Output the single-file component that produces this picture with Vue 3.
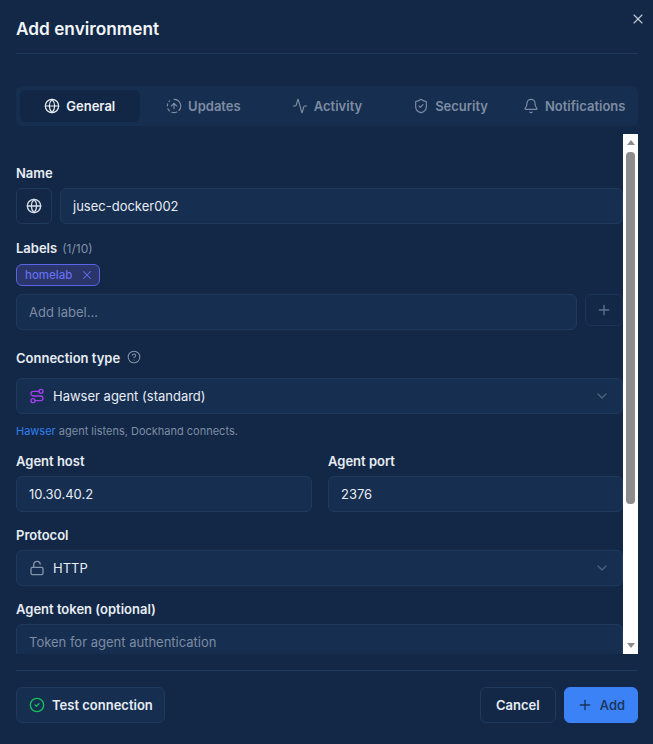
<script setup>
const tabs = [
  { label: 'General', active: true, paths: ['M12 2a14.5 14.5 0 0 0 0 20 14.5 14.5 0 0 0 0-20', 'M2 12h20', 'M22 12a10 10 0 1 1-20 0 10 10 0 0 1 20 0'] },
  { label: 'Updates', paths: ['M12 2a10 10 0 0 1 7.38 16.75', 'm16 12-4-4-4 4', 'M12 16V8', 'M2.5 8.875a10 10 0 0 0-.5 3', 'M2.83 16a10 10 0 0 0 2.43 3.4', 'M4.636 5.235a10 10 0 0 1 .891-.857', 'M8.644 21.42a10 10 0 0 0 7.631-.38'] },
  { label: 'Activity', paths: ['M22 12h-2.48a2 2 0 0 0-1.93 1.46l-2.35 8.36a.25.25 0 0 1-.48 0L9.24 2.18a.25.25 0 0 0-.48 0l-2.35 8.36A2 2 0 0 1 4.49 12H2'] },
  { label: 'Security', paths: ['M20 13c0 5-3.5 7.5-7.66 8.95a1 1 0 0 1-.67-.01C7.5 20.5 4 18 4 13V6a1 1 0 0 1 1-1c2 0 4.5-1.2 6.24-2.72a1.17 1.17 0 0 1 1.52 0C14.51 3.81 17 5 19 5a1 1 0 0 1 1 1z', 'm9 12 2 2 4-4'] },
  { label: 'Notifications', paths: ['M10.268 21a2 2 0 0 0 3.464 0', 'M3.262 15.326A1 1 0 0 0 4 17h16a1 1 0 0 0 .74-1.673C19.41 13.956 18 12.499 18 8A6 6 0 0 0 6 8c0 4.499-1.411 5.956-2.738 7.326'] }
]
</script>

<template>
  <div class="modal">
    <header class="head">
      <h2 class="title">Add environment</h2>
      <svg class="close" viewBox="0 0 24 24"><path d="M18 6 6 18" /><path d="m6 6 12 12" /></svg>
    </header>

    <nav class="tabs">
      <div v-for="t in tabs" :key="t.label" class="tab" :class="{ active: t.active }">
        <svg class="ic16" viewBox="0 0 24 24"><path v-for="p in t.paths" :key="p" :d="p" /></svg>
        <span>{{ t.label }}</span>
      </div>
    </nav>

    <div class="scroll">
      <div class="content">
        <label class="lab first">Name</label>
        <div class="row">
          <div class="iconbox">
            <svg class="ic16" viewBox="0 0 24 24"><circle cx="12" cy="12" r="10" /><path d="M12 2a14.5 14.5 0 0 0 0 20 14.5 14.5 0 0 0 0-20" /><path d="M2 12h20" /></svg>
          </div>
          <div class="input grow">jusec-docker002</div>
        </div>

        <label class="lab">Labels <span class="count">(1/10)</span></label>
        <div class="chip">homelab<svg class="chipx" viewBox="0 0 24 24"><path d="M18 6 6 18" /><path d="m6 6 12 12" /></svg></div>
        <div class="row addrow">
          <div class="input grow ph">Add label...</div>
          <div class="plusbox">
            <svg class="ic16" viewBox="0 0 24 24"><path d="M5 12h14" /><path d="M12 5v14" /></svg>
          </div>
        </div>

        <label class="lab lab-conn">Connection type
          <svg class="help" viewBox="0 0 24 24"><circle cx="12" cy="12" r="10" /><path d="M9.09 9a3 3 0 0 1 5.83 1c0 2-3 3-3 3" /><path d="M12 17h.01" /></svg>
        </label>
        <div class="input select">
          <svg class="ic16 purple" viewBox="0 0 24 24"><circle cx="6" cy="19" r="3" /><path d="M9 19h8.5a3.5 3.5 0 0 0 0-7h-11a3.5 3.5 0 0 1 0-7H15" /><circle cx="18" cy="5" r="3" /></svg>
          <span class="grow">Hawser agent (standard)</span>
          <svg class="ic16 chev" viewBox="0 0 24 24"><path d="m6 9 6 6 6-6" /></svg>
        </div>
        <p class="hint"><span class="link">Hawser</span> agent listens, Dockhand connects.</p>

        <div class="two">
          <div class="host">
            <label class="lab first">Agent host</label>
            <div class="input">10.30.40.2</div>
          </div>
          <div class="port">
            <label class="lab first">Agent port</label>
            <div class="input">2376</div>
          </div>
        </div>

        <label class="lab tight">Protocol</label>
        <div class="input select">
          <svg class="ic16 muted" viewBox="0 0 24 24"><rect x="3" y="11" width="18" height="11" rx="2" ry="2" /><path d="M7 11V7a5 5 0 0 1 9.9-1" /></svg>
          <span class="grow">HTTP</span>
          <svg class="ic16 chev" viewBox="0 0 24 24"><path d="m6 9 6 6 6-6" /></svg>
        </div>

        <label class="lab tight">Agent token (optional)</label>
        <div class="input ph">Token for agent authentication</div>
      </div>

      <div class="bar">
        <i class="up"></i>
        <div class="thumb"></div>
        <i class="down"></i>
      </div>
    </div>

    <footer class="foot">
      <button class="btn test">
        <svg class="ic16 green" viewBox="0 0 24 24"><circle cx="12" cy="12" r="10" /><path d="m9 12 2 2 4-4" /></svg>
        Test connection
      </button>
      <div class="right">
        <button class="btn cancel">Cancel</button>
        <button class="btn primary">
          <svg class="ic16" viewBox="0 0 24 24"><path d="M5 12h14" /><path d="M12 5v14" /></svg>
          Add
        </button>
      </div>
    </footer>
  </div>
</template>

<style>
html, body { margin: 0; background: #132846; }
</style>

<style scoped>
.modal {
  box-sizing: border-box;
  width: 653px;
  height: 744px;
  padding: 0 15px 0 16px;
  overflow: hidden;
  background: #132846;
  color: #e8edf4;
  font-family: Inter, "Liberation Sans", sans-serif;
  font-size: 13px;
  display: flex;
  flex-direction: column;
}
svg {
  fill: none;
  stroke: currentColor;
  stroke-width: 2;
  stroke-linecap: round;
  stroke-linejoin: round;
  flex: none;
}
.ic16 { width: 16px; height: 16px; }
.head {
  position: relative;
  height: 54px;
  box-sizing: border-box;
  border-bottom: 1px solid #1e3a5c;
  flex: none;
}
.title {
  margin: 0;
  padding-top: 18px;
  font-size: 17.25px;
  line-height: 21px;
  font-weight: 600;
  color: #f2f5f9;
}
.close {
  position: absolute;
  right: -8px;
  top: 11px;
  width: 16px;
  height: 16px;
  stroke-width: 1.6;
  color: #c4ccd8;
}
.tabs {
  margin-top: 32px;
  height: 40px;
  box-sizing: border-box;
  padding: 4px;
  display: flex;
  gap: 4px;
  background: #162e4f;
  border-radius: 6px;
  flex: none;
}
.tab {
  flex: 1;
  display: flex;
  align-items: center;
  justify-content: center;
  gap: 6px;
  border-radius: 6px;
  color: #7d8ca3;
  font-weight: 600;
  white-space: nowrap;
  font-size: 13px;
}
.tab svg { stroke-width: 1.75; }
.tab.active {
  background: #122745;
  color: #eef2f7;
}
.scroll {
  margin-top: 8px;
  height: 520px;
  display: flex;
  overflow: hidden;
  flex: none;
}
.content {
  width: 607px;
  flex: none;
  padding-top: 29px;
}
.lab {
  display: flex;
  align-items: center;
  margin-top: 14px;
  margin-bottom: 5px;
  height: 20px;
  font-weight: 600;
  font-size: 13px;
  color: #e8edf4;
}
.lab.first { margin-top: 0; }
.lab.tight { margin-top: 13px; }
.count {
  margin-left: 5px;
  font-size: 12px;
  font-weight: 400;
  color: #8090a6;
}
.lab-conn { margin-top: 18px; margin-bottom: 10px; }
.help {
  width: 14px;
  height: 14px;
  margin-left: 7px;
  margin-top: -2px;
  stroke-width: 1.75;
  color: #8494aa;
}
.row { display: flex; gap: 8px; }
.grow { flex: 1; min-width: 0; }
.iconbox {
  width: 34px;
  height: 34px;
  border: 1px solid #1e3a5c;
  border-radius: 6px;
  display: flex;
  align-items: center;
  justify-content: center;
  color: #d7deea;
  flex: none;
}
.input {
  box-sizing: border-box;
  height: 36px;
  padding: 0 12px;
  display: flex;
  align-items: center;
  background: #162e50;
  border: 1px solid #1e3a5f;
  border-radius: 6px;
  color: #e8edf4;
  font-size: 13px;
}
.ph { color: #7d8ca3; }
.chip {
  display: inline-flex;
  align-items: center;
  box-sizing: border-box;
  height: 22px;
  margin-top: 1px;
  padding: 0 5px 0 8px;
  gap: 8px;
  background: #2a3569;
  border: 1px solid #5b63e6;
  border-radius: 6px;
  color: #6670f0;
  font-size: 11.5px;
  font-weight: 500;
}
.chipx { width: 14px; height: 14px; stroke-width: 1.75; }
.addrow { margin-top: 8px; }
.plusbox {
  box-sizing: border-box;
  width: 38px;
  height: 32px;
  border: 1px solid #1a3556;
  border-radius: 6px;
  display: flex;
  align-items: center;
  justify-content: center;
  color: #5f7290;
  flex: none;
}
.select { gap: 8px; }
.purple { color: #a43ff0; }
.muted { color: #8494aa; }
.chev { color: #4f6282; }
.hint {
  margin: 9px 0 0;
  height: 16px;
  line-height: 16px;
  font-size: 11px;
  color: #7d8ca3;
}
.link { color: #2f7ff0; }
.two { display: flex; gap: 16px; margin-top: 12px; }
.host { width: 296px; flex: none; }
.port { flex: 1; }
.bar {
  position: relative;
  width: 15px;
  background: #fff;
  flex: none;
  display: flex;
  flex-direction: column;
  align-items: center;
}
.thumb {
  width: 9px;
  height: 352px;
  margin-top: 7px;
  background: #8c8c8c;
  border-radius: 4px;
}
.up, .down {
  width: 0;
  height: 0;
  border-left: 4.5px solid transparent;
  border-right: 4.5px solid transparent;
}
.up {
  margin-top: 6px;
  border-bottom: 5px solid #8c8c8c;
}
.down {
  position: absolute;
  bottom: 6px;
  border-top: 5px solid #8c8c8c;
}
.foot {
  margin-top: 16px;
  padding-top: 16px;
  border-top: 1px solid #1e3a5c;
  display: flex;
  justify-content: space-between;
  flex: none;
}
.right { display: flex; gap: 8px; }
.btn {
  box-sizing: border-box;
  height: 36px;
  padding: 0 12px;
  display: flex;
  align-items: center;
  gap: 7px;
  background: #162e50;
  border: 1px solid #1e3a5f;
  border-radius: 6px;
  color: #e8edf4;
  font: 600 13px Inter, "Liberation Sans", sans-serif;
}
.test { width: 149px; white-space: nowrap; }
.green { color: #16c060; }
.cancel {
  background: #132846;
  padding: 0 15px;
  width: 76px;
  justify-content: center;
}
.primary {
  background: #3b82f6;
  border-color: #3b82f6;
  color: #1a3356;
  font-weight: 500;
}
</style>
